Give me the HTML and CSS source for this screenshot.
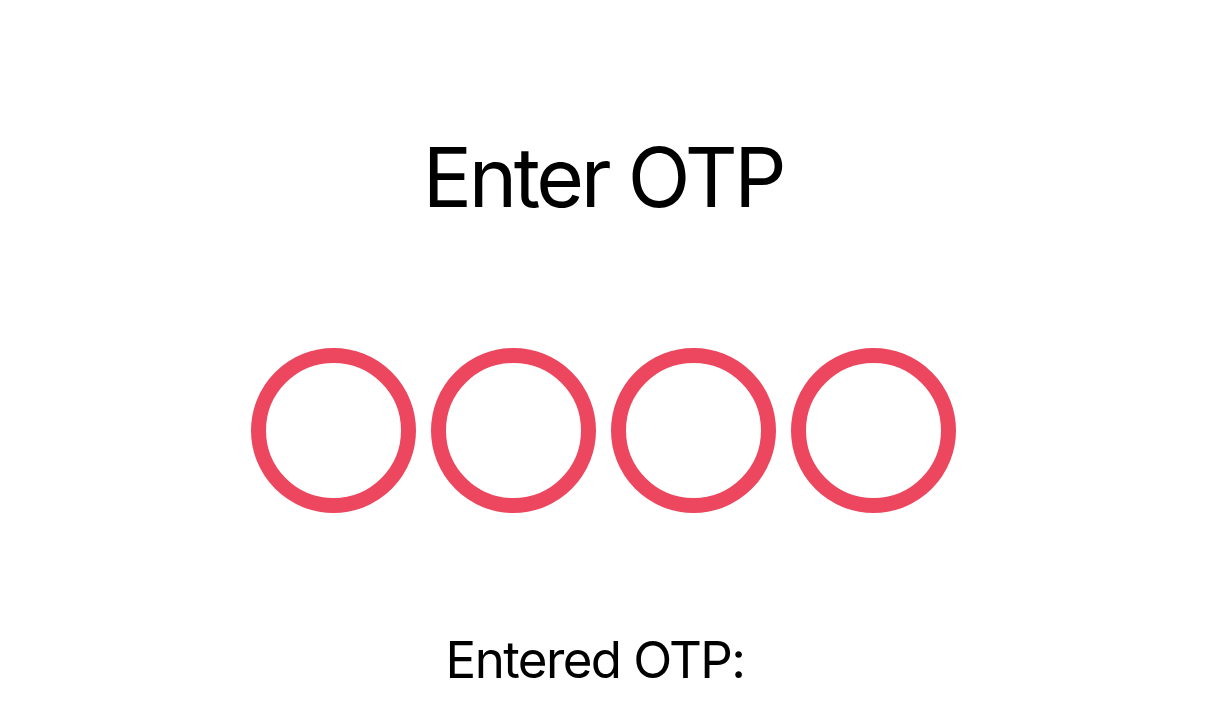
FILE: index.html
```html
<!DOCTYPE html>
<html>
<head>
<meta charset="utf-8">
<link rel="stylesheet" href="styles.css">
</head>
<body>
<main class="screen">
  <h1 class="title">Enter OTP</h1>
  <div class="otp-row">
    <div class="otp-dot"></div>
    <div class="otp-dot"></div>
    <div class="otp-dot"></div>
    <div class="otp-dot"></div>
  </div>
  <p class="entered">Entered OTP:</p>
</main>
</body>
</html>
```
FILE: styles.css
```css
html, body {
  margin: 0;
  padding: 0;
  background: #ffffff;
}
.screen {
  width: 1206px;
  height: 721px;
  display: flex;
  flex-direction: column;
  align-items: center;
  font-family: Inter, "Liberation Sans", sans-serif;
  color: #000000;
  overflow: hidden;
}
.title {
  margin: 128px 0 0 0;
  font-size: 82px;
  font-weight: 400;
  line-height: 100px;
  letter-spacing: -3.4px;
}
.otp-row {
  margin-top: 120px;
  display: flex;
  gap: 15px;
}
.otp-dot {
  width: 165px;
  height: 165px;
  box-sizing: border-box;
  border: 15px solid #ec475e;
  border-radius: 50%;
}
.entered {
  margin: 112px 0 0 0;
  padding-right: 16px;
  font-size: 51px;
  line-height: 70px;
  letter-spacing: -1.6px;
}
```
